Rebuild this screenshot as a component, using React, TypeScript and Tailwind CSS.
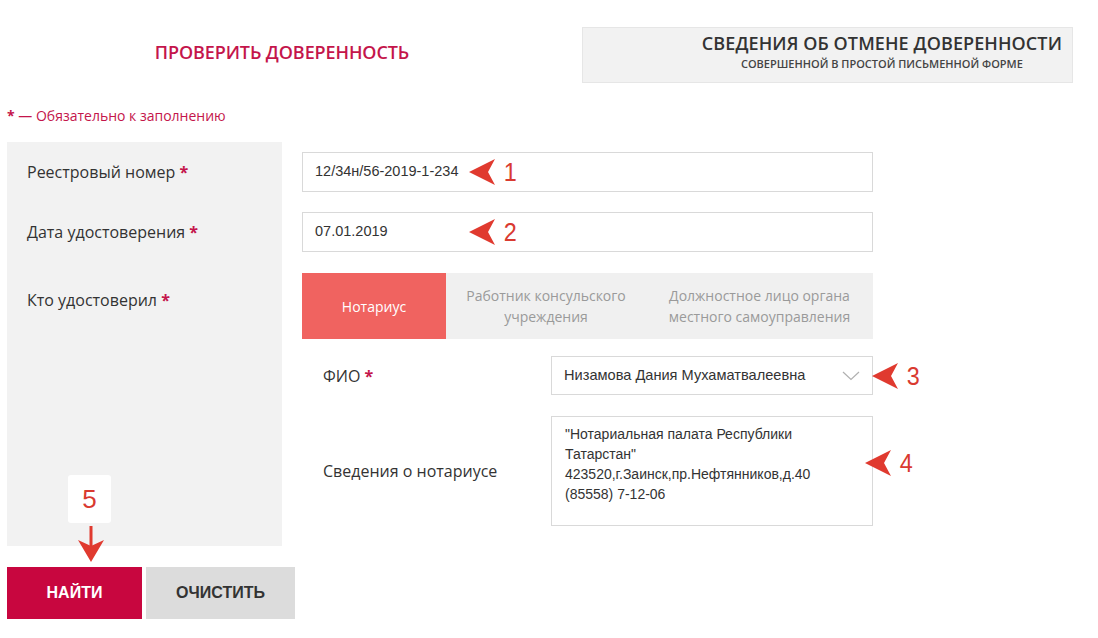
import React from "react";

const OS = "font-['Open_Sans',sans-serif]";
const AR = "font-['Liberation_Sans',Arial,sans-serif]";

function ArrowLeft({ className }: { className: string }) {
  return (
    <svg className={className} width="28" height="28" viewBox="0 0 28 28">
      <path d="M1 14 L27 1 L20 14 L27 27 Z" fill="#e03a2f" />
    </svg>
  );
}

function Annot({ n, top, left }: { n: string; top: string; left: string }) {
  return (
    <div className={`absolute flex items-center ${top} ${left}`}>
      <ArrowLeft className="" />
      <span className={`${AR} text-[26px] leading-none text-[#d93a30] ml-[7px] scale-x-[0.9]`}>{n}</span>
    </div>
  );
}

export default function App() {
  return (
    <div className={`relative w-[1098px] h-[638px] bg-white overflow-hidden ${OS}`}>
      {/* header */}
      <div className="flex pt-[27px]">
        <div className="w-[564px] h-[56px] flex items-center justify-center pb-[6px]">
          <span className="text-[18px] font-semibold text-[#c4154b] tracking-[-0.1px]">ПРОВЕРИТЬ ДОВЕРЕННОСТЬ</span>
        </div>
        <div className="ml-[18px] w-[491px] h-[56px] bg-[#f2f2f2] border border-[#e6e6e6] flex justify-end pr-[10px]">
          <div className="flex flex-col items-center pt-[2px]">
            <span className="text-[18px] font-semibold text-[#333] leading-[27px] tracking-[0.1px]">СВЕДЕНИЯ ОБ ОТМЕНЕ ДОВЕРЕННОСТИ</span>
            <span className="text-[11px] font-semibold text-[#444] leading-[14px]">СОВЕРШЕННОЙ В ПРОСТОЙ ПИСЬМЕННОЙ ФОРМЕ</span>
          </div>
        </div>
      </div>

      <div className="mt-[24px] ml-[7px] text-[14px] leading-[18px] text-[#c4154b]">
        <span className="font-bold">*</span> — Обязательно к заполнению
      </div>

      {/* main */}
      <div className="flex mt-[17px]">
        <div className="ml-[7px] w-[275px] h-[404px] bg-[#f2f2f2] pl-[20px] pt-[18px] text-[16px] leading-[24px] text-[#333]">
          <div>Реестровый номер <span className="text-[#c4154b] font-bold">*</span></div>
          <div className="mt-[36px]">Дата удостоверения <span className="text-[#c4154b] font-bold">*</span></div>
          <div className="mt-[44px]">Кто удостоверил <span className="text-[#c4154b] font-bold">*</span></div>
        </div>

        <div className="ml-[20px] w-[571px] pt-[10px]">
          <div className={`h-[40px] border border-[#d9d9d9] bg-white flex items-center pl-[12px] ${AR} text-[14.5px] text-[#333]`}>
            12/34н/56-2019-1-234
          </div>
          <div className={`mt-[20px] h-[40px] border border-[#d9d9d9] bg-white flex items-center pl-[12px] ${AR} text-[14.5px] text-[#333]`}>
            07.01.2019
          </div>
          <div className="mt-[21px] h-[66px] bg-[#f0f0f0] flex text-[14px] leading-[21px]">
            <div className="w-[144px] bg-[#f06360] text-white flex items-center justify-center">Нотариус</div>
            <div className="w-[200px] text-[#9a9a9a] flex items-center justify-center text-center">Работник консульского<br />учреждения</div>
            <div className="flex-1 text-[#9a9a9a] flex items-center justify-center text-center">Должностное лицо органа<br />местного самоуправления</div>
          </div>
          <div className="mt-[17px] flex items-center">
            <div className="w-[249px] pl-[21px] text-[16px] text-[#333]">ФИО <span className="text-[#c4154b] font-bold">*</span></div>
            <div className={`w-[322px] h-[39px] border border-[#d9d9d9] bg-white flex items-center pl-[12px] pr-[12px] justify-between ${AR} text-[14.6px] text-[#333]`}>
              <span>Низамова Дания Мухаматвалеевна</span>
              <svg width="18" height="10" viewBox="0 0 18 10"><path d="M1 1 L9 8.5 L17 1" fill="none" stroke="#b0b0b0" strokeWidth="1.2" /></svg>
            </div>
          </div>
          <div className="mt-[21px] flex items-center">
            <div className="w-[249px] pl-[21px] text-[16px] text-[#333]">Сведения о нотариусе</div>
            <div className={`w-[322px] h-[110px] border border-[#d9d9d9] bg-white pl-[13px] pt-[7px] ${AR} text-[14px] leading-[20px] text-[#333]`}>
              <div>"Нотариальная палата Республики</div>
              <div>Татарстан"</div>
              <div>423520,г.Заинск,пр.Нефтянников,д.40</div>
              <div>(85558) 7-12-06</div>
            </div>
          </div>
        </div>
      </div>

      {/* buttons */}
      <div className={`flex mt-[21px] ml-[7px] gap-[4px] ${AR}`}>
        <button className="w-[135px] h-[52px] bg-[#c8063f] text-white text-[16px] font-bold">НАЙТИ</button>
        <button className="w-[149px] h-[52px] bg-[#dcdcdc] text-[#333] text-[16px] font-bold">ОЧИСТИТЬ</button>
      </div>

      {/* annotations */}
      <Annot n="1" top="top-[158px]" left="left-[468px]" />
      <Annot n="2" top="top-[218px]" left="left-[468px]" />
      <Annot n="3" top="top-[362px]" left="left-[871px]" />
      <Annot n="4" top="top-[449px]" left="left-[864px]" />

      <div className={`absolute left-[68px] top-[475px] w-[43px] h-[48px] bg-white rounded-[3px] flex items-center justify-center ${AR} text-[26px] text-[#d93a30]`}>5</div>
      <svg className="absolute left-[78px] top-[526px]" width="26" height="38" viewBox="0 0 26 38">
        <path d="M13 0 L13 20" stroke="#e03a2f" strokeWidth="3" />
        <path d="M0 14 L13 36 L26 14 L13 20 Z" fill="#e03a2f" />
      </svg>
    </div>
  );
}
